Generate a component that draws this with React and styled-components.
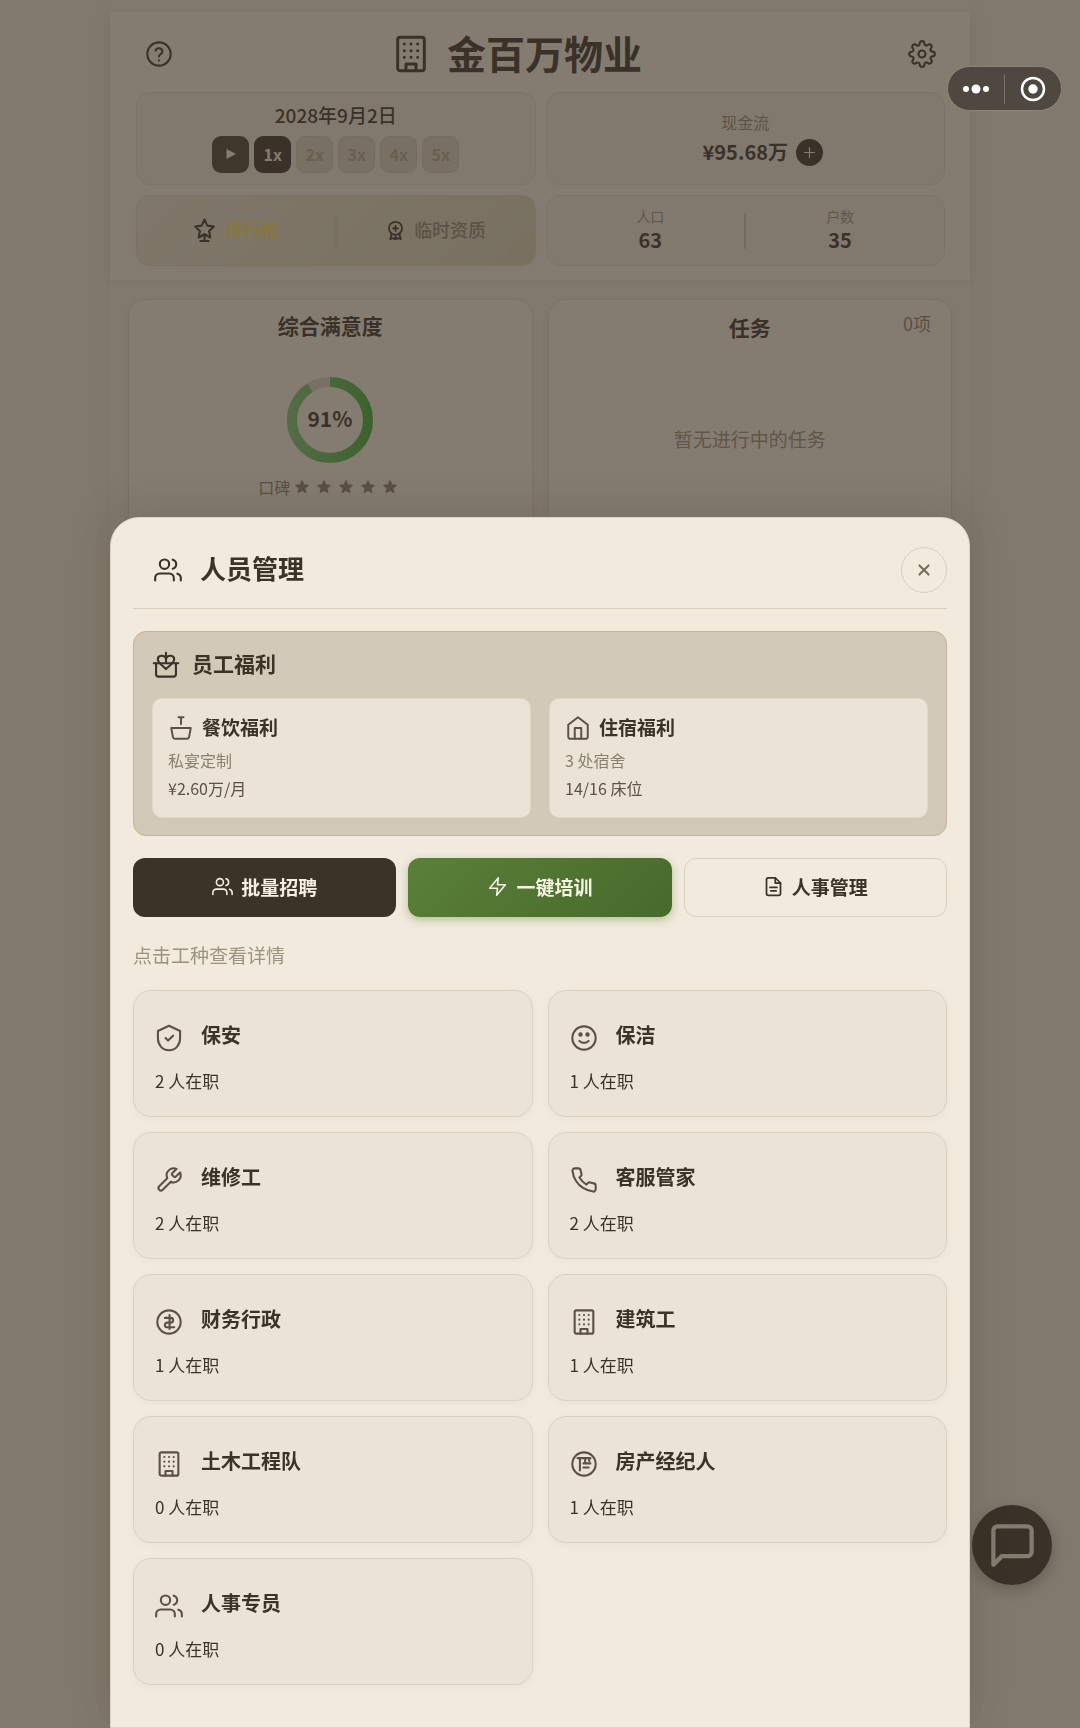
import React from 'react';
import styled, { createGlobalStyle } from 'styled-components';

const GlobalStyle = createGlobalStyle`
  * {
    box-sizing: border-box;
  }

  body {
    margin: 0;
    background: #ebe4d6;
    color: #3b3228;
    font-family: 'Noto Sans CJK SC', 'Noto Sans', sans-serif;
  }

  button {
    font-family: inherit;
    color: inherit;
    padding: 0;
    cursor: pointer;
  }

  h1, h2, h3, p {
    margin: 0;
  }
`;

const ICONS = {
  help: (
    <>
      <circle cx="12" cy="12" r="10" />
      <path d="M9.1 9a3 3 0 0 1 5.8 1c0 2-3 2.4-3 4.2" />
      <path d="M12 17.5h.01" />
    </>
  ),
  building: (
    <>
      <rect x="4" y="2" width="16" height="20" rx="1.5" />
      <path d="M9 22v-4h6v4" />
      <path d="M8 6h.01M12 6h.01M16 6h.01M8 10h.01M12 10h.01M16 10h.01M8 14h.01M12 14h.01M16 14h.01" />
    </>
  ),
  gear: (
    <>
      <circle cx="12" cy="12" r="3" />
      <path d="M19.4 15a1.65 1.65 0 0 0 .33 1.82l.06.06a2 2 0 0 1 0 2.83 2 2 0 0 1-2.83 0l-.06-.06a1.65 1.65 0 0 0-1.82-.33 1.65 1.65 0 0 0-1 1.51V21a2 2 0 0 1-2 2 2 2 0 0 1-2-2v-.09A1.65 1.65 0 0 0 9 19.4a1.65 1.65 0 0 0-1.82.33l-.06.06a2 2 0 0 1-2.83 0 2 2 0 0 1 0-2.83l.06-.06a1.65 1.65 0 0 0 .33-1.82 1.65 1.65 0 0 0-1.51-1H3a2 2 0 0 1-2-2 2 2 0 0 1 2-2h.09A1.65 1.65 0 0 0 4.6 9a1.65 1.65 0 0 0-.33-1.82l-.06-.06a2 2 0 0 1 0-2.83 2 2 0 0 1 2.83 0l.06.06a1.65 1.65 0 0 0 1.82.33H9a1.65 1.65 0 0 0 1-1.51V3a2 2 0 0 1 2-2 2 2 0 0 1 2 2v.09a1.65 1.65 0 0 0 1 1.51 1.65 1.65 0 0 0 1.82-.33l.06-.06a2 2 0 0 1 2.83 0 2 2 0 0 1 0 2.83l-.06.06a1.65 1.65 0 0 0-.33 1.82V9a1.65 1.65 0 0 0 1.51 1H21a2 2 0 0 1 2 2 2 2 0 0 1-2 2h-.09a1.65 1.65 0 0 0-1.51 1z" />
    </>
  ),
  trophy: (
    <>
      <path d="M12 1.5l2.7 5.8 6.3.8-4.6 4.4 1.2 6.2L12 15.6l-5.6 3.1 1.2-6.2L3 8.1l6.3-.8z" />
      <path d="M12 15.6V22M8 22h8" />
    </>
  ),
  award: (
    <>
      <circle cx="12" cy="9.5" r="7.5" />
      <path d="M12 6.5v6M9 9.5h6" />
      <path d="M7.5 15.5L6 22l3-1.4 2 1.4 1-3 1 3 2-1.4 3 1.4-1.5-6.5" />
    </>
  ),
  users: (
    <>
      <path d="M17 21v-2a4 4 0 0 0-4-4H5a4 4 0 0 0-4 4v2" />
      <circle cx="9" cy="7" r="4" />
      <path d="M23 21v-2a4 4 0 0 0-3-3.87M16 3.13a4 4 0 0 1 0 7.75" />
    </>
  ),
  gift: (
    <>
      <path d="M3.5 10.5V20a2 2 0 0 0 2 2h13a2 2 0 0 0 2-2v-9.5" />
      <path d="M1.5 10.5h21M12 1.5v8" />
      <path d="M12 6.5c-1.5-3.5-7-3-7 .5 0 3 4 5.5 7 8.5 3-3 7-5.5 7-8.5 0-3.5-5.5-4-7-.5z" />
    </>
  ),
  bowl: (
    <>
      <path d="M3 12h18l-1.6 8.6a2 2 0 0 1-1.9 1.4h-11a2 2 0 0 1-1.9-1.4z" />
      <path d="M9.7 2h4.6M12 2v6.5" />
    </>
  ),
  home: (
    <>
      <path d="M3 9l9-7 9 7v11a2 2 0 0 1-2 2H5a2 2 0 0 1-2-2z" />
      <path d="M9 22V12h6v10" />
    </>
  ),
  zap: <path d="M13 2L3 14h9l-1 8 10-12h-9l1-8z" />,
  file: (
    <>
      <path d="M14 2H6a2 2 0 0 0-2 2v16a2 2 0 0 0 2 2h12a2 2 0 0 0 2-2V8z" />
      <path d="M14 2v6h6M8 13h8M9 17h6" />
    </>
  ),
  shield: (
    <>
      <path d="M12 1.5l9.5 4.5v6.5c0 5-3.5 10-9.5 10s-9.5-5-9.5-10V6z" />
      <path d="M9 12l2.2 2.2L15.5 10" />
    </>
  ),
  smile: (
    <>
      <circle cx="12" cy="12" r="10" />
      <path d="M8 14.5s1.5 1.7 4 1.7 4-1.7 4-1.7" />
      <circle cx="9" cy="9" r="1" fill="currentColor" />
      <circle cx="15" cy="9" r="1" fill="currentColor" />
    </>
  ),
  wrench: (
    <path d="M14.7 6.3a1 1 0 0 0 0 1.4l1.6 1.6a1 1 0 0 0 1.4 0l3.77-3.77a6 6 0 0 1-7.94 7.94l-6.91 6.91a2.12 2.12 0 0 1-3-3l6.91-6.91a6 6 0 0 1 7.94-7.94l-3.76 3.76z" />
  ),
  phone: (
    <path d="M22 16.92v3a2 2 0 0 1-2.18 2 19.79 19.79 0 0 1-8.63-3.07 19.5 19.5 0 0 1-6-6 19.79 19.79 0 0 1-3.07-8.67A2 2 0 0 1 4.11 2h3a2 2 0 0 1 2 1.72 12.84 12.84 0 0 0 .7 2.81 2 2 0 0 1-.45 2.11L8.09 9.91a16 16 0 0 0 6 6l1.27-1.27a2 2 0 0 1 2.11-.45 12.84 12.84 0 0 0 2.81.7A2 2 0 0 1 22 16.92z" />
  ),
  money: (
    <>
      <circle cx="12" cy="12" r="10" />
      <path d="M12.5 6v12" />
      <path d="M8.5 8.5h5a2 2 0 0 1 0 4h-3a2 2 0 0 0 0 4h6" />
    </>
  ),
  broker: (
    <>
      <circle cx="12" cy="12" r="10" />
      <path d="M6.5 7h11M8.5 7v10.5M13 7v4M11.5 11.5h6M16.5 7v2.5M11.5 15h4.5" />
    </>
  ),
  chat: <path d="M21 15a2 2 0 0 1-2 2H7l-4 4V5a2 2 0 0 1 2-2h14a2 2 0 0 1 2 2z" />,
  close: <path d="M7 7l10 10M17 7L7 17" />,
  plus: <path d="M12 4v16M4 12h16" />
};

const Icon = ({ name, size = 28, stroke = 1.8 }) => (
  <svg
    width={size}
    height={size}
    viewBox="0 0 24 24"
    fill="none"
    stroke="currentColor"
    strokeWidth={stroke}
    strokeLinecap="round"
    strokeLinejoin="round"
    overflow="visible"
    aria-hidden="true"
  >
    {ICONS[name]}
  </svg>
);

const speeds = ['1x', '2x', '3x', '4x', '5x'];

const jobs = [
  { icon: 'shield', name: '保安', count: 2 },
  { icon: 'smile', name: '保洁', count: 1 },
  { icon: 'wrench', name: '维修工', count: 2 },
  { icon: 'phone', name: '客服管家', count: 2 },
  { icon: 'money', name: '财务行政', count: 1 },
  { icon: 'building', name: '建筑工', count: 1 },
  { icon: 'building', name: '土木工程队', count: 0 },
  { icon: 'broker', name: '房产经纪人', count: 1 },
  { icon: 'users', name: '人事专员', count: 0 }
];

const Gauge = ({ value }) => {
  const length = 2 * Math.PI * 38;
  return (
    <svg width="86" height="86" viewBox="0 0 86 86" role="img" aria-label={`${value}%`}>
      <defs>
        <linearGradient id="gauge" x1="1" y1="0" x2="0" y2="0">
          <stop offset="0" stopColor="#43ac36" />
          <stop offset="1" stopColor="#79c274" />
        </linearGradient>
      </defs>
      <circle cx="43" cy="43" r="38" fill="none" stroke="#d6ccbf" strokeWidth="10" />
      <path
        d="M43 5a38 38 0 1 1 0 76a38 38 0 1 1 0-76"
        fill="none"
        stroke="url(#gauge)"
        strokeWidth="10"
        strokeDasharray={`${(length * value) / 100} ${length}`}
      />
      <text x="43" y="50" textAnchor="middle" fontSize="21" fontWeight="700" fill="#3b3228">
        {value}%
      </text>
    </svg>
  );
};

const Star = () => (
  <svg width="16" height="16" viewBox="0 0 24 24" fill="currentColor" aria-hidden="true">
    <path d="M12 1l3.3 7 7.7.9-5.7 5.2 1.5 7.6L12 18l-6.8 3.7 1.5-7.6L1 8.9 8.7 8z" />
  </svg>
);

const App = () => (
  <>
    <GlobalStyle />
    <Page>
      <Header>
        <TitleRow>
          <IconButton aria-label="帮助">
            <Icon name="help" />
          </IconButton>
          <Brand>
            <Icon name="building" size={40} />
            <H1>金百万物业</H1>
          </Brand>
          <IconButton aria-label="设置">
            <Icon name="gear" />
          </IconButton>
        </TitleRow>
        <StatGrid>
          <StatCard gap={8}>
            <DateText>2028年9月2日</DateText>
            <SpeedRow>
              <SpeedButton tone="play" aria-label="播放">
                <svg width="12" height="12" viewBox="0 0 12 12" fill="currentColor" aria-hidden="true">
                  <path d="M1.5 1v10L11 6z" />
                </svg>
              </SpeedButton>
              {speeds.map((speed, i) => (
                <SpeedButton key={speed} tone={i === 0 ? 'active' : 'idle'}>{speed}</SpeedButton>
              ))}
            </SpeedRow>
          </StatCard>
          <StatCard gap={6}>
            <CashLabel>现金流</CashLabel>
            <CashRow>
              <Value>¥95.68万</Value>
              <AddButton aria-label="增加现金">
                <Icon name="plus" size={15} />
              </AddButton>
            </CashRow>
          </StatCard>
          <LinkCard>
            <LinkButton gold>
              <Icon name="trophy" size={25} stroke={2} />
              <span>排行榜</span>
            </LinkButton>
            <Divider />
            <LinkButton>
              <Icon name="award" size={21} stroke={2} />
              <span>临时资质</span>
            </LinkButton>
          </LinkCard>
          <SplitCard>
            <Count>
              <CountLabel>人口</CountLabel>
              <Value>63</Value>
            </Count>
            <Divider dark />
            <Count>
              <CountLabel>户数</CountLabel>
              <Value>35</Value>
            </Count>
          </SplitCard>
        </StatGrid>
      </Header>
      <Main>
        <Panel>
          <H2>综合满意度</H2>
          <GaugeWrapper>
            <Gauge value={91} />
          </GaugeWrapper>
          <Rating>
            <span>口碑</span>
            <Stars>
              <Star /><Star /><Star /><Star /><Star />
            </Stars>
          </Rating>
        </Panel>
        <Panel>
          <TaskHeader>
            <H2>任务</H2>
            <TaskCount>0项</TaskCount>
          </TaskHeader>
          <Empty>暂无进行中的任务</Empty>
        </Panel>
      </Main>
    </Page>
    <ChatButton aria-label="聊天">
      <Icon name="chat" size={51} stroke={2} />
    </ChatButton>
    <Overlay>
      <Modal role="dialog" aria-labelledby="staff-title">
        <ModalHeader>
          <Icon name="users" />
          <ModalTitle id="staff-title">人员管理</ModalTitle>
          <CloseButton aria-label="关闭">
            <Icon name="close" size={22} stroke={2.2} />
          </CloseButton>
        </ModalHeader>
        <Benefits>
          <BenefitsTitle>
            <Icon name="gift" />
            <H2>员工福利</H2>
          </BenefitsTitle>
          <BenefitGrid>
            <BenefitCard>
              <BenefitName>
                <Icon name="bowl" size={26} />
                <span>餐饮福利</span>
              </BenefitName>
              <BenefitText muted>私宴定制</BenefitText>
              <BenefitText>¥2.60万/月</BenefitText>
            </BenefitCard>
            <BenefitCard>
              <BenefitName>
                <Icon name="home" size={26} />
                <span>住宿福利</span>
              </BenefitName>
              <BenefitText muted>3 处宿舍</BenefitText>
              <BenefitText>14/16 床位</BenefitText>
            </BenefitCard>
          </BenefitGrid>
        </Benefits>
        <Actions>
          <ActionButton variant="dark">
            <Icon name="users" size={21} />
            批量招聘
          </ActionButton>
          <ActionButton variant="green">
            <Icon name="zap" size={21} />
            一键培训
          </ActionButton>
          <ActionButton>
            <Icon name="file" size={21} stroke={2} />
            人事管理
          </ActionButton>
        </Actions>
        <Hint>点击工种查看详情</Hint>
        <JobGrid>
          {jobs.map((job) => (
            <JobCard key={job.name}>
              <JobHeader>
                <JobIcon>
                  <Icon name={job.icon} />
                </JobIcon>
                <JobName>{job.name}</JobName>
              </JobHeader>
              <JobCount>{job.count} 人在职</JobCount>
            </JobCard>
          ))}
        </JobGrid>
      </Modal>
    </Overlay>
    <Capsule>
      <CapsuleButton aria-label="更多">
        <svg width="28" height="12" viewBox="0 0 28 12" fill="currentColor" aria-hidden="true">
          <circle cx="4" cy="6" r="3" />
          <circle cx="14" cy="6" r="4.5" />
          <circle cx="24" cy="6" r="3" />
        </svg>
      </CapsuleButton>
      <CapsuleLine />
      <CapsuleButton aria-label="退出">
        <svg width="26" height="26" viewBox="0 0 26 26" aria-hidden="true">
          <circle cx="13" cy="13" r="11" fill="none" stroke="currentColor" strokeWidth="2.5" />
          <circle cx="13" cy="13" r="4.7" fill="currentColor" />
        </svg>
      </CapsuleButton>
    </Capsule>
  </>
);

export default App;

const Page = styled.div`
  max-width: 860px;
  min-height: 100vh;
  margin: 0 auto;
  padding-top: 12px;
  background: #ebe4d6;
  box-shadow: 0 0 30px rgba(59, 50, 30, 0.06);
`;

const Header = styled.header`
  padding: 14px 25px 14px 26px;
  background: #f2ebdd;
  border-bottom: 1px solid #ddd4c4;
  box-shadow: 0 2px 8px rgba(59, 50, 38, 0.08);
`;

const TitleRow = styled.div`
  display: flex;
  align-items: center;
  justify-content: space-between;
  height: 56px;
  margin-bottom: 10px;
  padding: 0 9px;
`;

const IconButton = styled.button`
  display: flex;
  background: none;
  border: none;
`;

const Brand = styled.div`
  display: flex;
  align-items: center;
  gap: 16px;
  padding-right: 48px;
`;

const H1 = styled.h1`
  padding-bottom: 4px;
  font-size: 39px;
  line-height: 52px;
  font-weight: 700;
`;

const H2 = styled.h2`
  padding-bottom: 4px;
  font-size: 21px;
  line-height: 26px;
  font-weight: 700;
`;

const StatGrid = styled.div`
  display: grid;
  grid-template-columns: 1fr 1fr;
  grid-template-rows: minmax(93px, auto) minmax(71px, auto);
  gap: 10px;
`;

const StatBox = styled.div`
  display: flex;
  align-items: center;
  border: 1px solid #ddd4c4;
  border-radius: 14px;
  background: #ebe4d6;
`;

const StatCard = styled(StatBox)`
  flex-direction: column;
  justify-content: center;
  gap: ${(props) => props.gap}px;
`;

const LinkCard = styled(StatBox)`
  border-color: #ddd3bd;
  background: linear-gradient(135deg, #e8dfcd, #d6cdb4);
  box-shadow: 0 2px 8px rgba(59, 50, 38, 0.04);
`;

const SplitCard = styled(StatBox)`
  padding: 0 10px;
`;

const DateText = styled.div`
  padding-bottom: 2px;
  font-size: 19px;
  line-height: 22px;
  font-weight: 500;
`;

const SpeedRow = styled.div`
  display: flex;
  gap: 5px;
`;

const SpeedButton = styled.button`
  display: flex;
  align-items: center;
  justify-content: center;
  width: 37px;
  height: 37px;
  padding-bottom: 2px;
  border: 1px solid ${(props) => (props.tone === 'idle' ? '#cdc3b2' : 'transparent')};
  border-radius: 9px;
  font-size: 16px;
  font-weight: 700;
  background: ${(props) => ({ play: '#4a4034', active: '#3b3228', idle: '#d8cebe' })[props.tone]};
  color: ${(props) => (props.tone === 'idle' ? '#aca28f' : '#f2ebdd')};
`;

const CashLabel = styled.div`
  font-size: 16px;
  line-height: 22px;
  color: #8d8472;
`;

const CashRow = styled.div`
  display: flex;
  align-items: center;
  gap: 8px;
  padding-left: 35px;
`;

const Value = styled.div`
  padding-bottom: 2px;
  font-size: 20px;
  line-height: 25px;
  font-weight: 700;
`;

const AddButton = styled.button`
  display: flex;
  align-items: center;
  justify-content: center;
  width: 27px;
  height: 27px;
  border: none;
  border-radius: 50%;
  background: #3b3228;
  color: #f2ebdd;
`;

const LinkButton = styled.button`
  flex: 1;
  display: flex;
  align-items: center;
  justify-content: center;
  gap: 8px;
  border: none;
  background: none;
  font-size: 18px;

  span {
    padding-bottom: 3px;
    font-weight: 500;
    color: ${(props) => (props.gold ? '#ffdf4a' : '#8d8472')};
  }
`;

const Divider = styled.div`
  width: 2px;
  height: 36px;
  background: ${(props) => (props.dark ? '#cdc4b3' : '#d5ccb6')};
`;

const Count = styled.div`
  flex: 1;
  display: flex;
  flex-direction: column;
  align-items: center;
`;

const CountLabel = styled.div`
  padding-bottom: 2px;
  font-size: 14px;
  line-height: 18px;
  color: #988f7c;
`;

const Main = styled.main`
  display: grid;
  grid-template-columns: 1fr 1fr;
  gap: 15px;
  padding: 18px;
`;

const Panel = styled.section`
  min-height: 320px;
  padding: 12px 20px;
  border: 1px solid #ddd4c4;
  border-radius: 18px;
  background: #f2ebdd;
  box-shadow: 0 2px 8px rgba(59, 50, 38, 0.06);
  text-align: center;
`;

const GaugeWrapper = styled.div`
  display: flex;
  justify-content: center;
  margin: 35px 0 12px;
`;

const Rating = styled.div`
  display: flex;
  align-items: center;
  justify-content: center;
  gap: 4px;
  padding-right: 4px;
  font-size: 16px;
  line-height: 24px;
  color: #887e6c;
`;

const Stars = styled.div`
  display: flex;
  gap: 6px;
`;

const TaskHeader = styled.div`
  display: grid;
  grid-template-columns: 1fr auto 1fr;
  align-items: start;

  h2 {
    grid-column: 2;
    padding-top: 2px;
  }
`;

const TaskCount = styled.div`
  font-size: 18px;
  line-height: 22px;
  text-align: right;
  color: #887e6c;
`;

const Empty = styled.p`
  margin-top: 81px;
  font-size: 19px;
  line-height: 28px;
  color: #988f7c;
`;

const ChatButton = styled.button`
  position: fixed;
  right: 28px;
  bottom: 143px;
  display: flex;
  align-items: center;
  justify-content: center;
  width: 80px;
  height: 80px;
  border: none;
  border-radius: 50%;
  background: #3b3228;
  color: #f2ebdd;
  box-shadow: 0 5px 16px rgba(59, 50, 38, 0.4);
`;

const Overlay = styled.div`
  position: fixed;
  inset: 0;
  display: flex;
  flex-direction: column;
  align-items: center;
  justify-content: flex-end;
  background: rgba(59, 50, 40, 0.6);
`;

const Modal = styled.section`
  width: 100%;
  max-width: 860px;
  padding: 29px 22px 42px;
  border: 1px solid #ddd4c5;
  border-radius: 29px 29px 0 0;
  background: #f2eadd;
  box-shadow: 0 -8px 42px rgba(59, 50, 20, 0.16);
`;

const ModalHeader = styled.header`
  display: flex;
  align-items: center;
  gap: 18px;
  padding: 0 0 15px 21px;
  border-bottom: 1px solid #d9d0c1;
`;

const ModalTitle = styled.h2`
  flex: 1;
  padding-bottom: 5px;
  font-size: 26px;
  line-height: 32px;
  font-weight: 700;
`;

const CloseButton = styled.button`
  display: flex;
  align-items: center;
  justify-content: center;
  width: 46px;
  height: 46px;
  border: 1px solid #d9d0c1;
  border-radius: 50%;
  background: none;
  color: #756b5d;
`;

const Benefits = styled.section`
  margin-top: 22px;
  padding: 18px 18px 17px;
  border: 1px solid #c4b393;
  border-radius: 13px;
  background: #d3c9b8;
`;

const BenefitsTitle = styled.div`
  display: flex;
  align-items: center;
  gap: 12px;
  margin-bottom: 18px;
`;

const BenefitGrid = styled.div`
  display: grid;
  grid-template-columns: 1fr 1fr;
  gap: 18px;
`;

const BenefitCard = styled.div`
  padding: 15px 15px 14px;
  border: 1px solid #e0d7c8;
  border-radius: 10px;
  background: #ebe3d6;
`;

const BenefitName = styled.div`
  display: flex;
  align-items: center;
  gap: 8px;
  height: 28px;
  margin-bottom: 5px;
  font-size: 19px;
  font-weight: 700;

  span {
    padding-bottom: 3px;
  }

  svg {
    color: #5c5144;
  }
`;

const BenefitText = styled.p`
  padding-bottom: 2px;
  font-size: 16px;
  line-height: 26px;
  color: ${(props) => (props.muted ? '#8a806f' : '#5c5144')};
`;

const Actions = styled.div`
  display: grid;
  grid-template-columns: repeat(3, 1fr);
  gap: 12px;
  margin-top: 22px;
`;

const variants = {
  dark: 'background: #3b3228; border: none; color: #f5eee2;',
  green: `
    background: linear-gradient(135deg, #5a8038, #48692c);
    border: none;
    color: #f5f3e2;
    box-shadow: 0 3px 8px rgba(90, 128, 56, 0.4);
  `,
  plain: 'background: none; border: 1px solid #d9d0c1;'
};

const ActionButton = styled.button`
  display: flex;
  align-items: center;
  justify-content: center;
  gap: 8px;
  height: 59px;
  padding-bottom: 2px;
  border-radius: 12px;
  font-size: 19px;
  font-weight: 700;
  ${(props) => variants[props.variant || 'plain']}
`;

const Hint = styled.p`
  margin: 24px 0 21px;
  font-size: 19px;
  line-height: 28px;
  color: #9b927f;
`;

const JobGrid = styled.div`
  display: grid;
  grid-template-columns: 1fr 1fr;
  gap: 15px;
`;

const JobCard = styled.button`
  padding: 29px 21px 23px;
  border: 1px solid #dad1c3;
  border-radius: 18px;
  background: #ebe3d6;
  box-shadow: 0 2px 8px rgba(59, 50, 38, 0.04);
  text-align: left;
`;

const JobHeader = styled.div`
  display: flex;
  align-items: flex-start;
  gap: 18px;
`;

const JobIcon = styled.div`
  display: flex;
  padding-top: 4px;
  color: #5c5144;
`;

const JobName = styled.h3`
  font-size: 20px;
  line-height: 30px;
  font-weight: 700;
`;

const JobCount = styled.p`
  margin-top: 17px;
  font-size: 17px;
  line-height: 24px;
`;

const Capsule = styled.div`
  position: fixed;
  top: 66px;
  right: 18px;
  display: flex;
  align-items: center;
  width: 115px;
  height: 45px;
  border: 1px solid #8b8479;
  border-radius: 23px;
  background: #4f4841;
  color: #fff;
`;

const CapsuleButton = styled.button`
  flex: 1;
  display: flex;
  align-items: center;
  justify-content: center;
  border: none;
  background: none;
  color: #fff;
`;

const CapsuleLine = styled.div`
  width: 1px;
  height: 30px;
  background: #79736b;
`;
